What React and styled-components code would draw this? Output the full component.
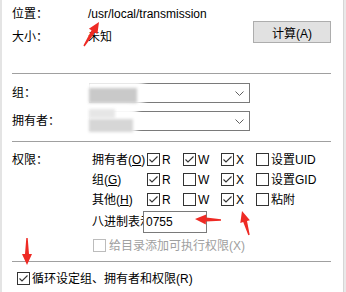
import React from "react";
import styled, { createGlobalStyle } from "styled-components";

const Global = createGlobalStyle`
  html, body { margin: 0; padding: 0; background: #fff; }
  body {
    font-family: "Segoe UI", "Microsoft YaHei UI", "Liberation Sans", "Noto Sans CJK SC", sans-serif;
    font-size: 12px;
    color: #000;
  }
`;

const Frame = styled.div`
  position: relative;
  width: 346px;
  height: 292px;
  overflow: hidden;
  display: flex;
  background: #fff;
`;

const LeftEdge = styled.div`
  flex: none;
  width: 2px;
  background: #e4e4e4;
`;

const RightEdge = styled.div`
  flex: none;
  width: 2px;
  background: #e9e9e9;
  border-left: 1px solid #d6d6d6;
`;

const Main = styled.div`
  flex: 1;
  min-width: 0;
  display: flex;
  flex-direction: column;
  padding: 0 12px 0 10px;
`;

const InfoGrid = styled.div`
  display: grid;
  grid-template-columns: 76px 1fr 78px;
  grid-template-rows: 20px 20px;
  row-gap: 3px;
  align-items: center;
  padding-top: 4px;
  height: 73px;
  box-sizing: border-box;
`;

const Text = styled.span`
  white-space: nowrap;
  line-height: 16px;
  color: ${(p) => (p.$disabled ? "#a0a0a0" : "#000")};
`;

const Button = styled.div`
  grid-column: 3;
  grid-row: 1 / 3;
  align-self: end;
  margin-bottom: 4px;
  height: 22px;
  box-sizing: border-box;
  border: 1px solid #adadad;
  background: #e1e1e1;
  display: flex;
  align-items: center;
  justify-content: center;
`;

const Rule = styled.div`
  flex: none;
  height: 1px;
  background: #a0a0a0;
`;

const OwnerGrid = styled.div`
  display: grid;
  grid-template-columns: 77px 161px;
  grid-auto-rows: 20px;
  row-gap: 8px;
  align-items: center;
  padding: 9px 0 10px;
`;

const Select = styled.div`
  position: relative;
  height: 20px;
  box-sizing: border-box;
  border: 1px solid #7a7a7a;
  background: #fff;
  display: flex;
  align-items: center;
  justify-content: flex-end;
  padding-right: 5px;
`;

const PermSection = styled.div`
  display: flex;
  flex-direction: column;
  padding: 8px 0 9px;
`;

const PermGrid = styled.div`
  display: grid;
  grid-template-columns: 80px 55px 36px 38px 35px 1fr;
  grid-auto-rows: 20px;
  align-items: start;
`;

const Cell = styled.div`
  display: flex;
  align-items: center;
  height: 13px;
  margin-top: 3px;
  white-space: nowrap;
  margin-left: ${(p) => p.$indent || 0}px;
`;

const Item = styled.label`
  display: flex;
  align-items: center;
  gap: ${(p) => p.$gap ?? 2}px;
  height: 13px;
  white-space: nowrap;
  margin-top: ${(p) => p.$top || 0}px;
  margin-left: ${(p) => p.$left || 0}px;
`;

const BoxFrame = styled.span`
  flex: none;
  width: 13px;
  height: 13px;
  box-sizing: border-box;
  border: 1px solid ${(p) => (p.$disabled ? "#bcbcbc" : "#333")};
  background: #fff;
  display: block;
  position: relative;
`;

const CheckSvg = styled.svg`
  position: absolute;
  left: 0;
  top: 0;
  width: 11px;
  height: 11px;
`;

const Acc = styled.span`
  text-decoration: underline;
  text-underline-offset: 1px;
`;

const OctalRow = styled.div`
  display: flex;
  height: 22px;
  margin: 1px 0 0 80px;
`;

const OctalLabel = styled.div`
  width: 51px;
  overflow: hidden;
  white-space: nowrap;
  display: flex;
  align-items: center;
`;

const OctalInput = styled.div`
  width: 64px;
  height: 22px;
  box-sizing: border-box;
  border: 1px solid #7a7a7a;
  background: #fff;
  display: flex;
  align-items: center;
  padding-left: 2px;
`;

const BottomSection = styled.div`
  padding: 10px 0 0 5px;
`;

const Smudge = styled.div`
  position: absolute;
  left: ${(p) => p.$x}px;
  top: ${(p) => p.$y}px;
  width: ${(p) => p.$w}px;
  height: ${(p) => p.$h}px;
  background: ${(p) => p.$c};
  border-radius: ${(p) => p.$r || 0}px;
  filter: blur(${(p) => p.$b || 1}px);
`;

const Overlay = styled.svg`
  position: absolute;
  left: 0;
  top: 0;
  width: 346px;
  height: 292px;
  pointer-events: none;
`;

function Check({ checked, disabled }) {
  return (
    <BoxFrame $disabled={disabled}>
      {checked && (
        <CheckSvg viewBox="0 0 11 11">
          <polyline points="1.5,5.5 4,8 9.5,2.5" fill="none" stroke="#333" strokeWidth="1.1" />
        </CheckSvg>
      )}
    </BoxFrame>
  );
}

function CheckItem({ checked, disabled, children, gap, top, left }) {
  return (
    <Item $gap={gap} $top={top} $left={left}>
      <Check checked={checked} disabled={disabled} />
      <Text $disabled={disabled}>{children}</Text>
    </Item>
  );
}

function Chevron() {
  return (
    <svg width="9" height="5" viewBox="0 0 9 5">
      <polyline points="0.5,0.5 4.5,4.5 8.5,0.5" fill="none" stroke="#606060" strokeWidth="1" />
    </svg>
  );
}

function arrowPoints(tail, tip, head = 11, hw = 5, neckW = 2, tailW = 0.7) {
  const dx = tip[0] - tail[0];
  const dy = tip[1] - tail[1];
  const len = Math.hypot(dx, dy);
  const ux = dx / len;
  const uy = dy / len;
  const nx = -uy;
  const ny = ux;
  const neck = [tip[0] - ux * head, tip[1] - uy * head];
  const pts = [
    [tail[0] + nx * tailW, tail[1] + ny * tailW],
    [neck[0] + nx * neckW, neck[1] + ny * neckW],
    [neck[0] + nx * hw, neck[1] + ny * hw],
    tip,
    [neck[0] - nx * hw, neck[1] - ny * hw],
    [neck[0] - nx * neckW, neck[1] - ny * neckW],
    [tail[0] - nx * tailW, tail[1] - ny * tailW],
  ];
  return pts.map((p) => p.map((v) => v.toFixed(1)).join(",")).join(" ");
}

const arrows = [
  { tail: [84, 46], tip: [99, 22] },
  { tail: [221, 220], tip: [195, 219] },
  { tail: [249, 235], tip: [242, 211] },
  { tail: [27, 238], tip: [27, 265] },
];

const perms = [
  { label: "拥有者", acc: "O", r: true, w: true, x: true, special: "设置UID" },
  { label: "组", acc: "G", r: true, w: false, x: true, special: "设置GID" },
  { label: "其他", acc: "H", r: true, w: false, x: true, special: "粘附" },
];

export default function App() {
  return (
    <>
      <Global />
      <Frame>
        <LeftEdge />
        <Main>
          <InfoGrid>
            <Text>位置：</Text>
            <Text>/usr/local/transmission</Text>
            <Text>大小：</Text>
            <Text>未知</Text>
            <Button>计算(A)</Button>
          </InfoGrid>
          <Rule />
          <OwnerGrid>
            <Text>组：</Text>
            <Select>
              <Chevron />
            </Select>
            <Text>拥有者：</Text>
            <Select>
              <Chevron />
            </Select>
          </OwnerGrid>
          <Rule />
          <PermSection>
            <PermGrid>
              {perms.map((p, i) => (
                <React.Fragment key={p.acc}>
                  <Cell>{i === 0 ? <Text>权限：</Text> : null}</Cell>
                  <Cell>
                    <Text>
                      {p.label}(<Acc>{p.acc}</Acc>)
                    </Text>
                  </Cell>
                  <CheckItem checked={p.r} top={3}>R</CheckItem>
                  <CheckItem checked={p.w} top={3}>W</CheckItem>
                  <CheckItem checked={p.x} top={3}>X</CheckItem>
                  <CheckItem checked={false} top={3}>{p.special}</CheckItem>
                </React.Fragment>
              ))}
            </PermGrid>
            <OctalRow>
              <OctalLabel>
                <Text>八进制表示</Text>
              </OctalLabel>
              <OctalInput>
                <Text>0755</Text>
              </OctalInput>
            </OctalRow>
            <CheckItem disabled top={6} left={81} gap={3}>
              给目录添加可执行权限(X)
            </CheckItem>
          </PermSection>
          <Rule />
          <BottomSection>
            <CheckItem checked gap={2}>
              循环设定组、拥有者和权限(R)
            </CheckItem>
          </BottomSection>
        </Main>
        <RightEdge />

        <Smudge $x={78} $y={81} $w={70} $h={24} $c="rgba(255,255,255,0.95)" $r={12} $b={2} />
        <Smudge $x={89} $y={88} $w={48} $h={15} $c="#c9c9c9" $b={1.5} />
        <Smudge $x={78} $y={106} $w={62} $h={29} $c="rgba(255,255,255,0.95)" $r={13} $b={2} />
        <Smudge $x={89} $y={109} $w={26} $h={9} $c="#e6e6e6" $b={1.5} />
        <Smudge $x={89} $y={119} $w={44} $h={13} $c="#d6d6d6" $b={1.5} />

        <Overlay viewBox="0 0 346 292">
          {arrows.map((a, i) => (
            <polygon key={i} points={arrowPoints(a.tail, a.tip)} fill="#ee2a24" />
          ))}
        </Overlay>
      </Frame>
    </>
  );
}
